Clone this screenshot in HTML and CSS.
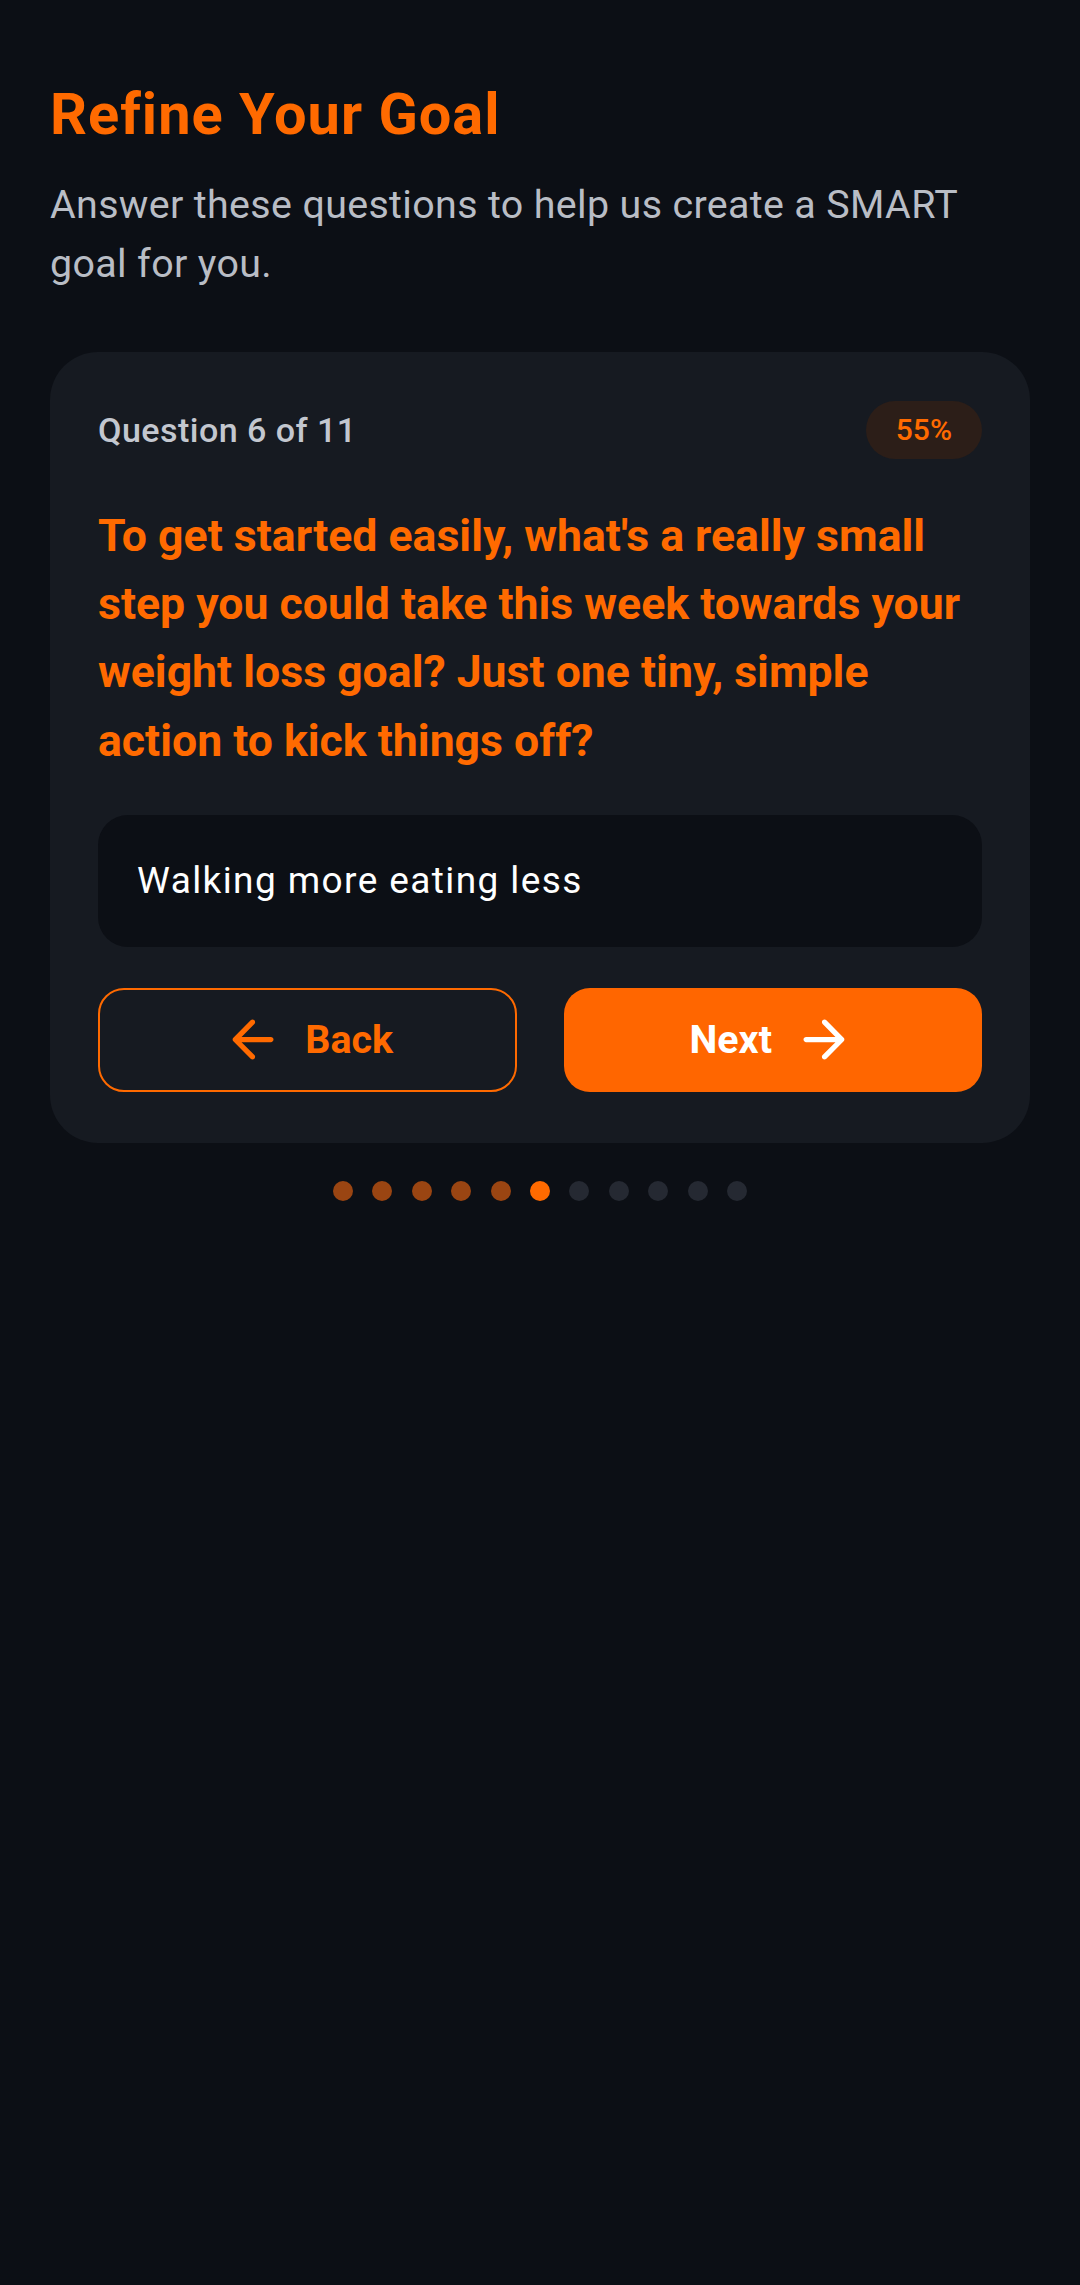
FILE: index.html
```html
<!DOCTYPE html>
<html lang="en">
<head>
<meta charset="utf-8">
<title>Refine Your Goal</title>
<link rel="stylesheet" href="styles.css">
</head>
<body>
<main class="screen">
  <h1 class="title">Refine Your Goal</h1>
  <p class="subtitle">Answer these questions to help us create a SMART goal for you.</p>
  <section class="card">
    <div class="card-head">
      <span class="counter">Question 6 of 11</span>
      <span class="pill">55%</span>
    </div>
    <p class="question">To get started easily, what's a really small step you could take this week towards your weight loss goal? Just one tiny, simple action to kick things off?</p>
    <div class="answer">Walking more eating less</div>
    <div class="actions">
      <button class="btn btn-back" type="button">
        <svg viewBox="0 0 24 24" aria-hidden="true"><path fill="currentColor" d="M19 11H7.83l4.88-4.88c.39-.39.39-1.03 0-1.42-.39-.39-1.02-.39-1.41 0l-6.59 6.59c-.39.39-.39 1.02 0 1.41l6.59 6.59c.39.39 1.02.39 1.41 0 .39-.39.39-1.02 0-1.41L7.83 13H19c.55 0 1-.45 1-1s-.45-1-1-1z"/></svg>
        <span>Back</span>
      </button>
      <button class="btn btn-next" type="button">
        <span>Next</span>
        <svg viewBox="0 0 24 24" aria-hidden="true"><path fill="currentColor" d="M5 13h11.17l-4.88 4.88c-.39.39-.39 1.03 0 1.42.39.39 1.02.39 1.41 0l6.59-6.59c.39-.39.39-1.02 0-1.41l-6.58-6.6c-.39-.39-1.02-.39-1.41 0-.39.39-.39 1.02 0 1.41L16.17 11H5c-.55 0-1 .45-1 1s.45 1 1 1z"/></svg>
      </button>
    </div>
  </section>
  <div class="dots">
    <span class="dot done"></span>
    <span class="dot done"></span>
    <span class="dot done"></span>
    <span class="dot done"></span>
    <span class="dot done"></span>
    <span class="dot current"></span>
    <span class="dot"></span>
    <span class="dot"></span>
    <span class="dot"></span>
    <span class="dot"></span>
    <span class="dot"></span>
  </div>
</main>
</body>
</html>
```
FILE: styles.css
```css
* {
  box-sizing: border-box;
  margin: 0;
  padding: 0;
}

html,
body {
  background: #0c0f15;
}

body {
  font-family: Roboto, "Noto Sans", sans-serif;
  width: 1080px;
  min-height: 2285px;
}

.screen {
  display: flex;
  flex-direction: column;
  padding: 81px 50px 0;
}

.title {
  font-size: 57.75px;
  line-height: 67.7px;
  font-weight: 700;
  letter-spacing: 1px;
  color: #ff6a00;
}

.subtitle {
  margin-top: 26px;
  font-size: 39.4px;
  line-height: 59px;
  letter-spacing: 0.35px;
  color: #b9bdc5;
}

.card {
  margin-top: 59px;
  background: #161a21;
  border-radius: 48px;
  padding: 49px 48px 51px;
}

.card-head {
  display: flex;
  justify-content: space-between;
  align-items: center;
  height: 58px;
}

.counter {
  font-size: 34.1px;
  font-weight: 500;
  letter-spacing: 0.45px;
  color: #c3c7cf;
}

.pill {
  display: flex;
  align-items: center;
  height: 58px;
  padding: 0 30px;
  border-radius: 29px;
  background: #2c1e18;
  color: #ff6a00;
  font-size: 30px;
  font-weight: 500;
}

.question {
  margin-top: 43px;
  font-size: 44.6px;
  line-height: 68.3px;
  font-weight: 700;
  color: #ff6a00;
}

.answer {
  display: flex;
  align-items: center;
  margin-top: 40px;
  height: 132px;
  padding: 0 39px;
  border-radius: 30px;
  background: #0c0f15;
  color: #ffffff;
  font-size: 37px;
  letter-spacing: 1.4px;
}

.actions {
  display: grid;
  grid-template-columns: 1fr 1fr;
  gap: 47px;
  margin-top: 41px;
}

.btn {
  display: flex;
  align-items: center;
  justify-content: center;
  gap: 21px;
  height: 104px;
  border-radius: 26px;
  font-family: inherit;
  font-size: 39.4px;
  font-weight: 700;
}

.btn svg {
  width: 63px;
  height: 63px;
  flex: none;
}

.btn-back {
  background: transparent;
  border: 2.6px solid #ff6a00;
  color: #ff6a00;
}

.btn-next {
  background: #ff6600;
  border: none;
  color: #ffffff;
}

.dots {
  display: flex;
  justify-content: center;
  gap: 19.4px;
  margin-top: 38px;
}

.dot {
  width: 20px;
  height: 20px;
  border-radius: 50%;
  background: #252932;
}

.dot.done {
  background: #9a4512;
}

.dot.current {
  background: #ff6a00;
}
```
